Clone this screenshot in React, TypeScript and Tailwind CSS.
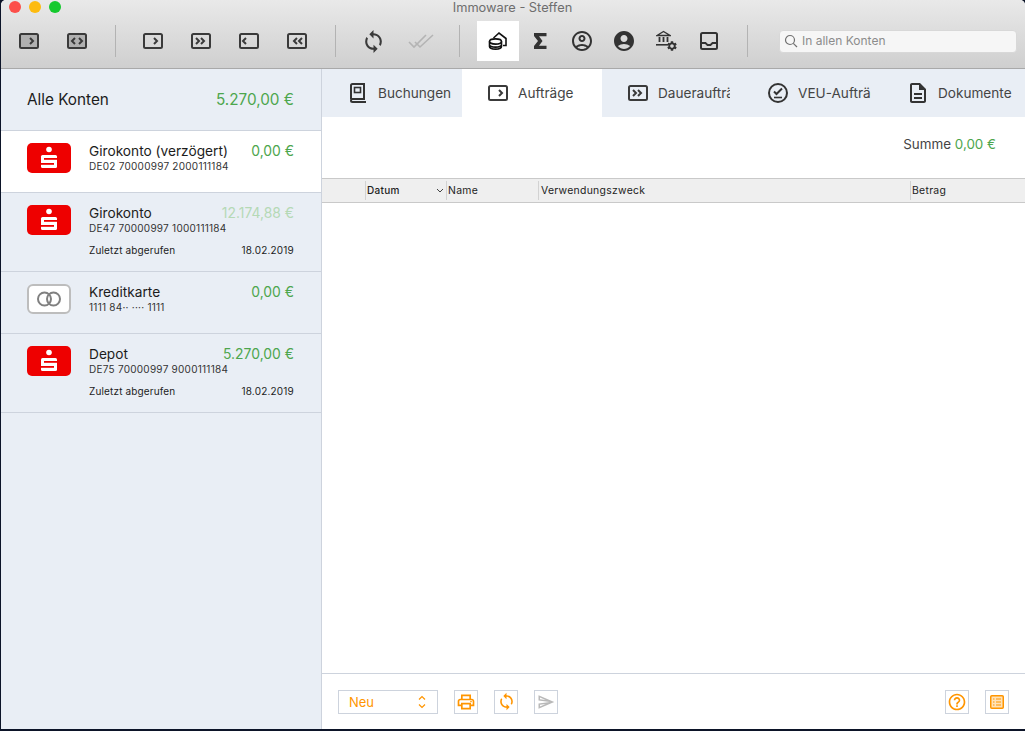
import { MdSync, MdOutlineAccountCircle, MdAccountCircle, MdSettings, MdOutlineDescription, MdOutlinePrint, MdHelpOutline, MdOutlineSend } from "react-icons/md";

const FONT = { fontFamily: "Inter, 'Noto Sans', sans-serif" };

// small rounded box with chevrons, used for all the order type icons
function OrderIcon({ kind, filled, w = 20, h = 16, color = "#3a3a3a" }: { kind: string; filled?: boolean; w?: number; h?: number; color?: string }) {
  const chev: Record<string, string[]> = {
    right: ["M11 5l3 3-3 3"],
    both: ["M8 5L5 8l3 3", "M12 5l3 3-3 3"],
    double: ["M5 5l3 3-3 3", "M10 5l3 3-3 3"],
    left: ["M7 5L4 8l3 3"],
    dleft: ["M10 5L7 8l3 3", "M15 5l-3 3 3 3"],
  };
  return (
    <svg width={w} height={h} viewBox="0 0 20 16" fill="none">
      <rect x="1" y="1" width="18" height="14" rx="1.5" fill={filled ? "#b0b0b0" : "none"} stroke={color} strokeWidth="2" />
      {chev[kind].map((d) => (
        <path key={d} d={d} stroke={color} strokeWidth="2" />
      ))}
    </svg>
  );
}

function Sep() {
  return <div className="w-px h-[32px] bg-[#b3b3b3] shrink-0" />;
}

function ToolBtn({ children, w = "w-[48px]" }: { children: React.ReactNode; w?: string }) {
  return <div className={`${w} h-[40px] flex items-center justify-center shrink-0`}>{children}</div>;
}

function SparkasseLogo() {
  return (
    <svg width="44" height="30" viewBox="0 0 44 30" className="shrink-0">
      <rect width="44" height="30" rx="5" fill="#ee0000" />
      <circle cx="22" cy="6.500" r="2.800" fill="#fff" />
      <rect x="14" y="12" width="16" height="13" rx="1.500" fill="#fff" />
      <rect x="17" y="15" width="13" height="1.800" fill="#ee0000" />
      <rect x="14" y="20" width="13" height="1.800" fill="#ee0000" />
    </svg>
  );
}

function CardLogo() {
  return (
    <svg width="44" height="30" viewBox="0 0 44 30" className="shrink-0">
      <rect x="1" y="1" width="42" height="28" rx="5" fill="#fff" stroke="#bdbdbd" strokeWidth="2" />
      <circle cx="17.500" cy="15" r="6.500" fill="none" stroke="#808080" strokeWidth="2" />
      <circle cx="26.500" cy="15" r="6.500" fill="none" stroke="#808080" strokeWidth="2" />
    </svg>
  );
}

type Account = { name: string; iban: string; amount: string; logo: "s" | "card"; faded?: boolean; selected?: boolean; last?: string; h: string };

const ACCOUNTS: Account[] = [
  { name: "Girokonto (verzögert)", iban: "DE02 70000997 2000111184", amount: "0,00 €", logo: "s", selected: true, h: "h-[62px]" },
  { name: "Girokonto", iban: "DE47 70000997 1000111184", amount: "12.174,88 €", logo: "s", faded: true, last: "18.02.2019", h: "h-[79px]" },
  { name: "Kreditkarte", iban: "1111 84·· ···· 1111", amount: "0,00 €", logo: "card", h: "h-[62px]" },
  { name: "Depot", iban: "DE75 70000997 9000111184", amount: "5.270,00 €", logo: "s", last: "18.02.2019", h: "h-[79px]" },
];

function AccountRow({ a }: { a: Account }) {
  return (
    <div className={`${a.h} ${a.selected ? "bg-white" : ""} border-b border-[#cdd3dd] pl-[26px] pr-[27px] pt-[12px] flex gap-[18px] shrink-0`}>
      {a.logo === "s" ? <SparkasseLogo /> : <CardLogo />}
      <div className="flex-1 min-w-0">
        <div className="flex justify-between items-center h-[16px]">
          <span className="text-[13.700px] text-[#1c1c1c]">{a.name}</span>
          <span className={`text-[13.900px] ${a.faded ? "text-[#b5d9b5]" : "text-[#4da64d]"}`}>{a.amount}</span>
        </div>
        <div className="text-[10px] tracking-[0.25px] text-[#333] leading-[14px]">{a.iban}</div>
        {a.last && (
          <div className="flex justify-between text-[10px] tracking-[0.15px] text-[#1c1c1c] leading-[14px] mt-[8px]">
            <span>Zuletzt abgerufen</span>
            <span className="tracking-[0.2px]">{a.last}</span>
          </div>
        )}
      </div>
    </div>
  );
}

function BookIcon() {
  return (
    <svg width="18" height="20" viewBox="0 0 18 20" fill="none" stroke="#333" strokeWidth="2">
      <path d="M2 16V2.500A1.500 1.500 0 0 1 3.500 1h11.500v15H3.500a1.500 1.500 0 0 0 0 3H17" />
      <rect x="5.500" y="4.500" width="6" height="5" strokeWidth="1.600" />
    </svg>
  );
}

function CheckCircle() {
  return (
    <svg width="20" height="20" viewBox="0 0 20 20" fill="none" stroke="#333" strokeWidth="2">
      <circle cx="10" cy="10" r="9" />
      <path d="M6 8.500l2.500 2.500L14 5.500" />
      <path d="M6 14.500h8" strokeWidth="1.600" />
    </svg>
  );
}

const TABS = [
  { label: "Buchungen", icon: <BookIcon />, pad: "pl-[27px]", gap: "gap-[11px]", tw: "w-[74px]" },
  { label: "Aufträge", icon: <OrderIcon kind="right" />, active: true, pad: "pl-[26px]", gap: "gap-[10px]", tw: "w-[74px]" },
  { label: "Daueraufträge", icon: <OrderIcon kind="double" />, pad: "pl-[26px]", gap: "gap-[10px]", tw: "w-[72px]" },
  { label: "VEU-Aufträge", icon: <CheckCircle />, pad: "pl-[26px]", gap: "gap-[10px]", tw: "w-[73px]" },
  { label: "Dokumente", icon: <MdOutlineDescription size={24} color="#333" />, pad: "pl-[24px]", gap: "gap-[8px]", tw: "w-[76px]" },
];

function OrangeBtn({ children }: { children: React.ReactNode }) {
  return <div className="w-[24px] h-[24px] border border-[#cdd3dd] flex items-center justify-center shrink-0">{children}</div>;
}

export default function App() {
  return (
    <div className="w-[1025px] h-[731px] bg-[#0c1428] pl-px pb-[2px] overflow-hidden" style={FONT}>
      <div className="w-[1024px] h-[729px] flex flex-col bg-white rounded-t-[5px] overflow-hidden">
        {/* titlebar + toolbar */}
        <div className="h-[69px] shrink-0 border-b border-[#a9a9a9] bg-gradient-to-b from-[#e9e9e9] to-[#cfcfcf] flex flex-col">
          <div className="h-[14px] relative flex justify-center">
            <div className="absolute left-[8px] top-[1px] flex gap-[8px]">
              <div className="w-[12px] h-[12px] rounded-full bg-[#fc4f4a]" />
              <div className="w-[12px] h-[12px] rounded-full bg-[#fdbb0f]" />
              <div className="w-[12px] h-[12px] rounded-full bg-[#14c92d]" />
            </div>
            <span className="text-[12.800px] leading-[15px] text-[#6e6e6e] pr-[1px]">Immoware - Steffen</span>
          </div>
          <div className="flex items-center pl-[4px] h-[40px] mt-[7px]">
            <ToolBtn><OrderIcon kind="right" filled /></ToolBtn>
            <ToolBtn><OrderIcon kind="both" filled /></ToolBtn>
            <div className="w-[14px]" />
            <Sep />
            <div className="w-[13px]" />
            <ToolBtn><OrderIcon kind="right" /></ToolBtn>
            <ToolBtn><OrderIcon kind="double" /></ToolBtn>
            <ToolBtn><OrderIcon kind="left" /></ToolBtn>
            <ToolBtn><OrderIcon kind="dleft" /></ToolBtn>
            <div className="w-[14px]" />
            <Sep />
            <div className="w-[13px]" />
            <ToolBtn><MdSync size={25} color="#3a3a3a" /></ToolBtn>
            <ToolBtn>
              <svg width="26" height="16" viewBox="0 0 26 16" fill="none" stroke="#b4b4b4" strokeWidth="1.600">
                <path d="M1 9l5 5L18 2" />
                <path d="M7 9l5 5L25 2" />
              </svg>
            </ToolBtn>
            <div className="w-[14px]" />
            <Sep />
            <div className="w-[17px]" />
            <ToolBtn w="w-[42px] bg-white">
              <svg width="20" height="20" viewBox="0 0 20 20" fill="none" stroke="#111" strokeWidth="1.600">
                <path d="M5.500 7L11 2l7 5.500V14.500h-3" />
                <ellipse cx="7.500" cy="10.500" rx="6" ry="2.600" fill="#fff" />
                <path d="M1.500 10.500v5c0 1.400 2.700 2.600 6 2.600s6-1.200 6-2.600v-5M1.500 13.500c0 1.400 2.700 2.600 6 2.600s6-1.200 6-2.600" />
              </svg>
            </ToolBtn>
            <ToolBtn w="w-[42px]">
              <svg width="13" height="16" viewBox="0 0 13 16">
                <path d="M0 0h12.500v3.200H5L8.500 8 5 12.800h7.500V16H0v-3l4-5-4-5z" fill="#333" />
              </svg>
            </ToolBtn>
            <ToolBtn w="w-[42px]"><MdOutlineAccountCircle size={24} color="#333" /></ToolBtn>
            <ToolBtn w="w-[42px]"><MdAccountCircle size={24} color="#333" /></ToolBtn>
            <ToolBtn w="w-[43px]">
              <div className="relative w-[22px] h-[22px]">
                <svg width="15" height="16" viewBox="0 0 15 16" fill="none" stroke="#333">
                  <path d="M1 5.500L7.500 1.500 14 5.500z" strokeWidth="1.400" />
                  <path d="M3.500 7v5M7.500 7v5M11.500 7v5" strokeWidth="1.800" />
                  <path d="M0 14.800h12" strokeWidth="1.600" />
                </svg>
                <MdSettings size={12} color="#333" className="absolute right-0 bottom-0" />
              </div>
            </ToolBtn>
            <ToolBtn w="w-[42px]">
              <svg width="18" height="18" viewBox="0 0 18 18" fill="none" stroke="#333" strokeWidth="2">
                <rect x="1" y="1" width="16" height="16" rx="1.500" />
                <path d="M1 11h4.500l2 2h3l2-2H17" strokeWidth="1.800" />
              </svg>
            </ToolBtn>
            <div className="w-[17px]" />
            <Sep />
            <div className="w-[31px]" />
            <div className="w-[238px] h-[23px] bg-[#f6f6f6] rounded-[4px] border border-[#d8d8d8] flex items-center pl-[4px] gap-[4px] shrink-0">
              <svg width="14" height="14" viewBox="0 0 14 14" fill="none" stroke="#707070" strokeWidth="1.200">
                <circle cx="6" cy="6" r="4.500" />
                <path d="M9.300 9.300L13 13" />
              </svg>
              <span className="text-[12px] text-[#8c8c8c]">In allen Konten</span>
            </div>
          </div>
        </div>

        <div className="flex-1 flex min-h-0">
          {/* sidebar */}
          <div className="w-[321px] shrink-0 bg-[#e9eef5] border-r border-[#cdd3dd] flex flex-col">
            <div className="h-[62px] shrink-0 border-b border-[#cdd3dd] pl-[26px] pr-[27px] pt-[1px] flex justify-between items-center">
              <span className="text-[15.300px] text-[#1c1c1c]">Alle Konten</span>
              <span className="text-[15.300px] text-[#4da64d]">5.270,00 €</span>
            </div>
            {ACCOUNTS.map((a) => (
              <AccountRow key={a.iban} a={a} />
            ))}
          </div>

          {/* main */}
          <div className="flex-1 flex flex-col min-w-0">
            <div className="h-[48px] shrink-0 bg-[#e9eef5] flex">
              {TABS.map((t) => (
                <div key={t.label} className={`w-[140px] shrink-0 flex items-center ${t.pad} ${t.gap} ${t.active ? "bg-white" : ""}`}>
                  {t.icon}
                  <span className={`text-[13.600px] text-[#444] ${t.tw} overflow-hidden whitespace-nowrap`}>{t.label}</span>
                </div>
              ))}
            </div>
            <div className="h-[61px] shrink-0 flex justify-end items-center pr-[29px] pb-[6px] text-[13.400px]">
              <span className="text-[#444]">Summe&nbsp;</span>
              <span className="text-[#4da64d]">0,00 €</span>
            </div>
            <div className="h-[25px] shrink-0 border-y border-[#c9c9c9] bg-[#efefef] flex items-center text-[10.400px] tracking-[0.3px] text-[#222]">
              <div className="w-[43px]" />
              <div className="w-[81px] h-[19px] border-l border-[#d2d2d2] pl-[1px] flex items-center justify-between pr-[2px] font-medium text-[10px]">
                <span>Datum</span>
                <svg width="8" height="5" viewBox="0 0 8 5" fill="none" stroke="#444" strokeWidth="1">
                  <path d="M1 1l3 3 3-3" />
                </svg>
              </div>
              <div className="w-[92px] h-[19px] border-l border-[#d2d2d2] pl-[1px] flex items-center">Name</div>
              <div className="w-[372px] h-[19px] border-l border-[#d2d2d2] pl-[2px] flex items-center">Verwendungszweck</div>
              <div className="flex-1 h-[19px] border-l border-[#d2d2d2] pl-[1px] flex items-center">Betrag</div>
            </div>
            <div className="flex-1" />
            <div className="h-[56px] shrink-0 border-t border-[#cdd3dd] flex items-center pl-[16px] pr-[16px]">
              <div className="w-[100px] h-[24px] border border-[#cdd3dd] flex items-center justify-between pl-[10px] pr-[11px] text-[13px] text-[#ff9500] shrink-0">
                <span className="pt-[2px]">Neu</span>
                <svg width="8" height="14" viewBox="0 0 8 14" fill="none" stroke="#ff9500" strokeWidth="1.200">
                  <path d="M1 4.500l3-3 3 3M1 9.500l3 3 3-3" />
                </svg>
              </div>
              <div className="w-[16px]" />
              <OrangeBtn><MdOutlinePrint size={20} color="#ff9500" /></OrangeBtn>
              <div className="w-[16px]" />
              <OrangeBtn><MdSync size={19} color="#ff9500" /></OrangeBtn>
              <div className="w-[16px]" />
              <OrangeBtn><MdOutlineSend size={18} color="#b9b9b9" /></OrangeBtn>
              <div className="flex-1" />
              <OrangeBtn><MdHelpOutline size={20} color="#ff9500" /></OrangeBtn>
              <div className="w-[16px]" />
              <OrangeBtn>
                <svg width="14" height="14" viewBox="0 0 14 14">
                  <rect x="0.750" y="0.750" width="12.500" height="12.500" rx="1" fill="#ffe2b8" stroke="#ff9500" strokeWidth="1.500" />
                  <path d="M3 4h1.500M6 4h5M3 7h1.500M6 7h5M3 10h1.500M6 10h5" stroke="#ff9500" strokeWidth="1.200" />
                </svg>
              </OrangeBtn>
            </div>
          </div>
        </div>
      </div>
    </div>
  );
}
